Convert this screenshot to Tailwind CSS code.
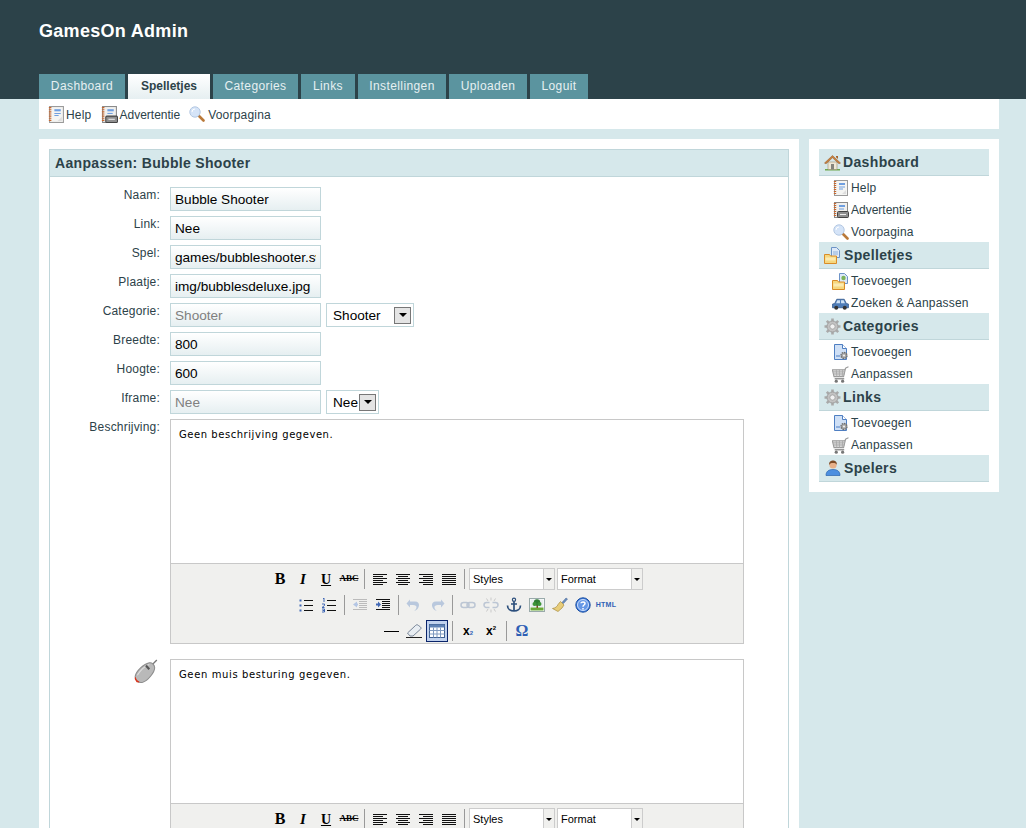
<!DOCTYPE html>
<html lang="nl">
<head>
    <meta charset="UTF-8">
    <title>GamesOn Admin</title>
    <script src="https://cdn.jsdelivr.net/npm/@tailwindcss/browser@4"></script>
</head>
<body class="h-screen overflow-hidden bg-[#d6e8eb] font-['Liberation_Sans',Arial,sans-serif] text-[12px] tracking-[.2px] text-[#2c4249]">

    <!-- icon set -->
    <svg class="hidden">
        <symbol id="i-book" viewBox="0 0 16 16"><rect x="1.500" y=".5" width="13" height="15" fill="#f4f4f2" stroke="#9a9a9a"/><path d="M2 1v14" stroke="#c8662c" stroke-width="2.400" stroke-dasharray="1 1"/><path d="M6 3h6v2H6z" fill="#6f9fe0"/><path d="M6 7h6M6 9h4" stroke="#6f9fe0"/><path d="M9 14l4-4v4z" fill="#ddd"/></symbol>
        <symbol id="i-bookad" viewBox="0 0 16 16"><rect x="1.500" y=".5" width="13" height="15" fill="#f0f0ee" stroke="#8a8a8a"/><path d="M2 1v14" stroke="#c8662c" stroke-width="2.400" stroke-dasharray="1 1"/><path d="M6 3h6v2H6z" fill="#6f9fe0"/><path d="M6 7h5" stroke="#6f9fe0"/><rect x="4.500" y="9.500" width="11" height="6" rx="1" fill="#8f8f8f" stroke="#444"/><path d="M7 12.500h6" stroke="#eee"/></symbol>
        <symbol id="i-search" viewBox="0 0 16 16"><path d="M9.500 9.500l5 5" stroke="#b9793a" stroke-width="2.600" stroke-linecap="round"/><circle cx="6" cy="6" r="5.200" fill="#d5e4f8" stroke="#b4c8e2"/><path d="M3 6a3 3 0 013-3" stroke="#fff" fill="none"/></symbol>
        <symbol id="i-home" viewBox="0 0 17 17"><path d="M1 15h15v1.500H1z" fill="#6ea94a"/><path d="M4 8h9v7.500H4z" fill="#efe8d6" stroke="#9a8d70" stroke-width=".6"/><path d="M7 10h3v5.500H7z" fill="#85857d"/><path d="M.5 9l8-7.500L16.500 9l-1.500.8-6.500-6-6.500 6z" fill="#c9803c" stroke="#8f5526" stroke-width=".5"/><path d="M12 2h2v3l-2-1.700z" fill="#a5642e"/></symbol>
        <symbol id="i-folder" viewBox="0 0 17 17"><path d="M7.500.5h5l3 3v7h-8z" fill="#dde9f8" stroke="#6d93c7"/><path d="M9 5h5M9 7h5" stroke="#8fb0db"/><path d="M.5 7.500h5l1 1.500h6v7.500h-12z" fill="#f6d77e" stroke="#d98c28"/><path d="M1.500 12h10" stroke="#fbeab2" stroke-width="3"/></symbol>
        <symbol id="i-folderadd" viewBox="0 0 17 17"><path d="M7.500.5h5l3 3v7h-8z" fill="#dde9f8" stroke="#6d93c7"/><circle cx="11.500" cy="5" r="2.200" fill="#7cb35a"/><path d="M.5 7.500h5l1 1.500h6v7.500h-12z" fill="#f6d77e" stroke="#d98c28"/><path d="M1.500 12h10" stroke="#fbeab2" stroke-width="3"/></symbol>
        <symbol id="i-car" viewBox="0 0 16 16"><path d="M.5 8.500l2-.5 2-4h7l2 4 2 .5V12H.5z" fill="#4f7db8" stroke="#2d5488" stroke-width=".7"/><path d="M5 5h2.500v2.700H3.800zM8.500 5H11l1.200 2.700H8.500z" fill="#cfe2f6"/><circle cx="4" cy="12" r="1.900" fill="#333"/><circle cx="12" cy="12" r="1.900" fill="#333"/></symbol>
        <symbol id="i-gear" viewBox="0 0 17 17"><path d="M8.500 .5v16M.5 8.500h16M2.800 2.800l11.400 11.400M14.200 2.800L2.800 14.200" stroke="#a9a9a9" stroke-width="2.600"/><circle cx="8.500" cy="8.500" r="5.500" fill="#c2c2c2" stroke="#a0a0a0"/><circle cx="8.500" cy="8.500" r="2.600" fill="#f1f1f1" stroke="#999" stroke-width=".7"/></symbol>
        <symbol id="i-docgear" viewBox="0 0 16 16"><path d="M1.500.5h8l4 4v11h-12z" fill="#cfe0f6" stroke="#4f7fc2"/><path d="M9.500.5v4h4" fill="#fff" stroke="#4f7fc2"/><path d="M3 12h4" stroke="#4f7fc2"/><circle cx="11" cy="11.500" r="3" fill="#a5a5a5" stroke="#6f6f6f" stroke-dasharray="1.500 .8" stroke-width="1.400"/><circle cx="11" cy="11.500" r="1.100" fill="#eee"/></symbol>
        <symbol id="i-cart" viewBox="0 0 16 16"><path d="M15.500 .8l-2.500 1-1 1.700H.3l1.600 6.500h9l1.800-7.500" fill="#d8d8d8" stroke="#9a9a9a"/><path d="M1 5.500h11M1.500 7.500h10.500M4 3.500l.6 6.500M7 3.500v6.500M10 3.500l-.3 6.500" stroke="#a8a8a8" stroke-width=".8"/><path d="M2.500 12h9" stroke="#8f8f8f" stroke-width="1.300"/><circle cx="4" cy="14.300" r="1.500" fill="#777"/><circle cx="10" cy="14.300" r="1.500" fill="#777"/></symbol>
        <symbol id="i-user" viewBox="0 0 16 16"><path d="M1 15.500c0-4 2.500-6 7-6s7 2 7 6z" fill="#4d8fe0" stroke="#2a63ad" stroke-width=".7"/><circle cx="8" cy="5" r="3.600" fill="#e8b088"/><path d="M4.200 5c-.5-3.500 2-4.500 3.800-4.500S12.300 1.500 11.800 5c-.5-1.500-1.500-2-3.800-2s-3.300.5-3.600 2z" fill="#7d4a24"/></symbol>
        <symbol id="i-mouse" viewBox="0 0 24 24"><path d="M17 6l5-5" stroke="#777" stroke-width="1.200"/><path d="M15 3.500c2.500-.5 5 2 5 4.500 0 4-6 12-11 13.500C5 22.500 1.500 19.500 2 16 3 11 10 4.500 15 3.500z" fill="#b9b9b9" stroke="#8d8d8d"/><path d="M4 15C7 10 11 6.500 15 5" stroke="#dedede" fill="none"/><path d="M12 6l3 3.500" stroke="#555" stroke-width="2"/><path d="M2.200 17c.2 2 1.500 3.700 3.500 4.300l-2-.2-1.500-2.500z" fill="#d9341c" stroke="#d9341c"/></symbol>

        <symbol id="t-left" viewBox="0 0 16 16"><path d="M1 3.500h14M1 5.500h10M1 7.500h14M1 9.500h10M1 11.500h14M1 13.500h10" stroke="#111"/></symbol>
        <symbol id="t-center" viewBox="0 0 16 16"><path d="M1 3.500h14M3 5.500h10M1 7.500h14M3 9.500h10M1 11.500h14M3 13.500h10" stroke="#111"/></symbol>
        <symbol id="t-right" viewBox="0 0 16 16"><path d="M1 3.500h14M5 5.500h10M1 7.500h14M5 9.500h10M1 11.500h14M5 13.500h10" stroke="#111"/></symbol>
        <symbol id="t-full" viewBox="0 0 16 16"><path d="M1 3.500h14M1 5.500h14M1 7.500h14M1 9.500h14M1 11.500h14M1 13.500h14" stroke="#111"/></symbol>
        <symbol id="t-bullets" viewBox="0 0 16 16"><path d="M6 3.500h9M6 8.500h9M6 13.500h9" stroke="#111"/><path d="M1.500 2.500h2v2h-2zM1.500 7.500h2v2h-2zM1.500 12.500h2v2h-2z" fill="#3f67b5"/></symbol>
        <symbol id="t-numbers" viewBox="0 0 16 16"><path d="M6 3.500h9M6 8.500h9M6 13.500h9" stroke="#111"/><path d="M2 2l1-1v4M1 7h2.500v1.500L1 10.500h2.500M1 12h2.500v3H1M1.500 13.500h2" stroke="#3f67b5" fill="none"/></symbol>
        <symbol id="t-outdent" viewBox="0 0 16 16"><path d="M1 2.500h14M7 4.500h8M7 6.500h8M7 8.500h8M7 10.500h8M1 12.500h14" stroke="#bbb"/><path d="M1 7.500l4-3v2h1v2H5v2z" fill="#b4c6e4"/></symbol>
        <symbol id="t-indent" viewBox="0 0 16 16"><path d="M1 2.500h14M7 4.500h8M7 6.500h8M7 8.500h8M7 10.500h8M1 12.500h14" stroke="#111"/><path d="M6 7.500l-3-3v2H1v2h2v2z" fill="#3f67b5"/></symbol>
        <symbol id="t-undo" viewBox="0 0 16 16"><path d="M4 4.500h5c6 0 5 8-1 9.500 3-2 4-6-1-6H4v2.500L.5 6.500 4 2.500z" fill="#b9c8dd"/></symbol>
        <symbol id="t-redo" viewBox="0 0 16 16"><path d="M12 4.500H7c-6 0-5 8 1 9.500-3-2-4-6 1-6h3v2.500l3.500-4-3.500-4z" fill="#b9c8dd"/></symbol>
        <symbol id="t-link" viewBox="0 0 16 16"><rect x="1" y="5.500" width="8" height="5" rx="2.500" fill="none" stroke="#bcc6d4" stroke-width="1.500"/><rect x="7" y="5.500" width="8" height="5" rx="2.500" fill="none" stroke="#bcc6d4" stroke-width="1.500"/></symbol>
        <symbol id="t-unlink" viewBox="0 0 16 16"><path d="M6.500 5.500H3.500a2.500 2.500 0 000 5h3M9.500 5.500h3a2.500 2.500 0 010 5h-3" fill="none" stroke="#bcc6d4" stroke-width="1.500"/><path d="M8 .5v3M8 12.500v3M3.500 1.500l1.500 2.500M12.500 1.500L11 4M3.500 14.500L5 12M12.500 14.500L11 12" stroke="#c9c9c9"/></symbol>
        <symbol id="t-anchor" viewBox="0 0 16 16"><circle cx="8" cy="2.800" r="1.600" fill="none" stroke="#2c4f7c" stroke-width="1.200"/><path d="M8 4.500V14M5 7h6M1.500 8.500c0 3.500 3 5.500 6.500 5.500s6.500-2 6.500-5.500" fill="none" stroke="#2c4f7c" stroke-width="1.700"/></symbol>
        <symbol id="t-image" viewBox="0 0 16 16"><rect x=".5" y="1.500" width="15" height="13" fill="#fff" stroke="#9aa"/><rect x="1.500" y="2.500" width="13" height="8" fill="#e8eef0"/><path d="M1.500 10.500h13v3h-13z" fill="#6aa938"/><path d="M7.500 6h1.500v5H7.500z" fill="#7a4f26"/><circle cx="8" cy="5.500" r="3.200" fill="#2f7d32"/><circle cx="5.500" cy="7" r="2" fill="#3d9438"/><circle cx="10.500" cy="7" r="2" fill="#3d9438"/></symbol>
        <symbol id="t-clean" viewBox="0 0 16 16"><path d="M10 5.500l4-4.500 1.500 1-4 4.500z" fill="#6a8fc0" stroke="#3f5f8f" stroke-width=".5"/><path d="M8.500 4.500l3.500 3.500-2 3-4 3.500-5.500-3c2.500-.3 5-2 5.500-4z" fill="#e8cd7a" stroke="#a68b3e" stroke-width=".7"/></symbol>
        <symbol id="t-help" viewBox="0 0 16 16"><circle cx="8" cy="8" r="7.200" fill="#3f7de0" stroke="#1d4f9f"/><circle cx="8" cy="8" r="5.500" fill="#fff" fill-opacity=".2" stroke="#cfe0fa"/><path d="M6 6.300C6 4.500 10 4.500 10 6.500 10 8 8 8 8 9.700M8 11v1.500" stroke="#fff" stroke-width="1.500" fill="none"/></symbol>
        <symbol id="t-eraser" viewBox="0 0 16 16"><path d="M1.500 10L9.500 2.500c1-1 2-1 3 0l2 1.500c.7.8.7 1.500 0 2.200L7 13H4z" fill="#e8edf2" stroke="#5b6b82" stroke-width=".8"/><path d="M0 14.500h16" stroke="#222"/></symbol>
        <symbol id="t-table" viewBox="0 0 16 16"><rect x=".5" y="1.500" width="15" height="13" fill="#fff" stroke="#3e5f90"/><path d="M.5 1.500h15v3H.5z" fill="#5f82b5"/><path d="M4.500 4.500v10M8 4.500v10M11.500 4.500v10M.5 7.500h15M.5 11h15" stroke="#7e99bf"/></symbol>
    </svg>

    <!-- Header -->
    <header class="h-[99px] bg-[#2c4249] pl-[39px]">
        <h1 class="h-[74px] pt-[21px] text-[18px] leading-[21px] font-bold tracking-[.3px] text-white">GamesOn Admin</h1>
        <nav class="flex gap-[3px] text-[12px] leading-[25px] tracking-[.4px] text-[#e6f0f2]">
            <a class="h-[25px] w-[86px] bg-[#5b949f] text-center">Dashboard</a>
            <a class="h-[25px] w-[82px] bg-gradient-to-b from-white to-[#e6eff1] text-center font-bold tracking-normal text-[#2c4249]">Spelletjes</a>
            <a class="h-[25px] w-[85px] bg-[#5b949f] text-center">Categories</a>
            <a class="h-[25px] w-[54px] bg-[#5b949f] text-center">Links</a>
            <a class="h-[25px] w-[88px] bg-[#5b949f] text-center">Instellingen</a>
            <a class="h-[25px] w-[78px] bg-[#5b949f] text-center">Uploaden</a>
            <a class="h-[25px] w-[58px] bg-[#5b949f] text-center">Loguit</a>
        </nav>
    </header>

    <!-- Sub nav -->
    <div class="mr-[27px] ml-[39px] flex h-[30px] items-center bg-white pl-[9px]">
        <svg class="mr-[1px] h-[17px] w-[17px]"><use href="#i-book"/></svg><span class="mt-[2px] mr-[10px]">Help</span>
        <svg class="mr-[1px] h-[17px] w-[17px]"><use href="#i-bookad"/></svg><span class="mt-[2px] mr-[9px] tracking-normal">Advertentie</span>
        <svg class="mr-[3px] h-[16px] w-[16px]"><use href="#i-search"/></svg><span class="mt-[2px]">Voorpagina</span>
    </div>

    <div class="mt-[10px] flex items-start pl-[39px]">

        <!-- Main -->
        <main class="w-[760px] bg-white p-[10px]">
            <h2 class="h-[28px] border border-[#c0d6da] bg-[#d6e8eb] pl-[5px] text-[14px] leading-[26px] font-bold tracking-[.32px]">Aanpassen: Bubble Shooter</h2>
            <div class="border-x border-[#c0d6da] pt-[10px] pr-[44px]">

                <div class="mb-[5px] flex">
                    <label class="-mt-[1px] w-[110px] text-right">Naam:</label>
                    <input class="ml-[10px] h-[24px] w-[151px] border border-[#c0d6da] bg-gradient-to-b from-white to-[#e6eff1] pl-[4px] text-[13.6px] tracking-normal text-black" value="Bubble Shooter">
                </div>
                <div class="mb-[5px] flex">
                    <label class="-mt-[1px] w-[110px] text-right">Link:</label>
                    <input class="ml-[10px] h-[24px] w-[151px] border border-[#c0d6da] bg-gradient-to-b from-white to-[#e6eff1] pl-[4px] text-[13.6px] tracking-normal text-black" value="Nee">
                </div>
                <div class="mb-[5px] flex">
                    <label class="-mt-[1px] w-[110px] text-right">Spel:</label>
                    <input class="ml-[10px] h-[24px] w-[151px] border border-[#c0d6da] bg-gradient-to-b from-white to-[#e6eff1] pr-[4px] pl-[4px] text-[13.6px] tracking-normal text-black" value="games/bubbleshooter.swf">
                </div>
                <div class="mb-[5px] flex">
                    <label class="-mt-[1px] w-[110px] text-right">Plaatje:</label>
                    <input class="ml-[10px] h-[24px] w-[151px] border border-[#c0d6da] bg-gradient-to-b from-white to-[#e6eff1] pl-[4px] text-[13.6px] tracking-normal text-black" value="img/bubblesdeluxe.jpg">
                </div>
                <div class="mb-[5px] flex">
                    <label class="-mt-[1px] w-[110px] text-right">Categorie:</label>
                    <input disabled class="ml-[10px] h-[24px] w-[151px] border border-[#c0d6da] bg-gradient-to-b from-white to-[#e6eff1] pl-[4px] text-[13.6px] tracking-normal text-[#808080]" value="Shooter">
                    <div class="ml-[5px] flex h-[24px] w-[88px] items-center border border-[#c0d6da] bg-white pl-[6px] text-[13.6px] tracking-normal text-black">
                        <span class="mt-[2px]">Shooter</span>
                        <span class="mr-[2px] ml-auto flex h-[17px] w-[17px] items-center justify-center border border-[#777] bg-[#e4e4e4]"><span class="h-0 w-0 border-x-[4px] border-t-[4px] border-x-transparent border-t-black"></span></span>
                    </div>
                </div>
                <div class="mb-[5px] flex">
                    <label class="-mt-[1px] w-[110px] text-right">Breedte:</label>
                    <input class="ml-[10px] h-[24px] w-[151px] border border-[#c0d6da] bg-gradient-to-b from-white to-[#e6eff1] pl-[4px] text-[13.6px] tracking-normal text-black" value="800">
                </div>
                <div class="mb-[5px] flex">
                    <label class="-mt-[1px] w-[110px] text-right">Hoogte:</label>
                    <input class="ml-[10px] h-[24px] w-[151px] border border-[#c0d6da] bg-gradient-to-b from-white to-[#e6eff1] pl-[4px] text-[13.6px] tracking-normal text-black" value="600">
                </div>
                <div class="mb-[5px] flex">
                    <label class="-mt-[1px] w-[110px] text-right">Iframe:</label>
                    <input disabled class="ml-[10px] h-[24px] w-[151px] border border-[#c0d6da] bg-gradient-to-b from-white to-[#e6eff1] pl-[4px] text-[13.6px] tracking-normal text-[#808080]" value="Nee">
                    <div class="ml-[5px] flex h-[24px] w-[53px] items-center border border-[#c0d6da] bg-white pl-[6px] text-[13.6px] tracking-normal text-black">
                        <span class="mt-[2px]">Nee</span>
                        <span class="mr-[2px] ml-auto flex h-[17px] w-[17px] items-center justify-center border border-[#777] bg-[#e4e4e4]"><span class="h-0 w-0 border-x-[4px] border-t-[4px] border-x-transparent border-t-black"></span></span>
                    </div>
                </div>

                <!-- Beschrijving -->
                <div class="mb-[15px] flex">
                    <label class="-mt-[1px] w-[110px] text-right">Beschrijving:</label>
                    <div class="ml-[10px] w-[574px] border border-[#c8c8c8] bg-white">
                        <div class="h-[143px] p-[8px] font-['DejaVu_Sans',sans-serif] text-[10px] leading-[14px] tracking-[.55px] text-black">Geen beschrijving gegeven.</div>
                        <div class="flex h-[80px] flex-col gap-[6px] border-t border-[#c8c8c8] bg-[#f0f0ee] pt-[5px] tracking-normal">
                            <div class="flex h-[20px] items-center justify-center gap-[3px] pr-[1px]">
                                <span class="flex h-[20px] w-[20px] items-center justify-center font-['Liberation_Serif',serif] text-[16px] font-bold text-black">B</span>
                                <span class="flex h-[20px] w-[20px] items-center justify-center font-['Liberation_Serif',serif] text-[15px] font-bold italic text-black">I</span>
                                <span class="flex h-[20px] w-[20px] items-center justify-center font-['Liberation_Serif',serif] text-[14px] font-bold text-black underline">U</span>
                                <span class="flex h-[20px] w-[20px] items-center justify-center font-['Liberation_Serif',serif] text-[9px] font-bold text-black line-through">ABC</span>
                                <span class="flex h-[20px] w-[5px] justify-center"><span class="w-[1px] bg-[#999]"></span></span>
                                <svg class="h-[20px] w-[20px] p-[2px]"><use href="#t-left"/></svg>
                                <svg class="h-[20px] w-[20px] p-[2px]"><use href="#t-center"/></svg>
                                <svg class="h-[20px] w-[20px] p-[2px]"><use href="#t-right"/></svg>
                                <svg class="h-[20px] w-[20px] p-[2px]"><use href="#t-full"/></svg>
                                <span class="flex h-[20px] w-[5px] justify-center"><span class="w-[1px] bg-[#999]"></span></span>
                                <div class="-ml-[1px] flex h-[22px] w-[86px] items-center border border-[#ccc] bg-white pl-[3px] text-[11px] text-black">Styles<span class="ml-auto flex h-full w-[11px] items-center justify-center border-l border-[#ccc] bg-[#f0f0ee]"><span class="h-0 w-0 border-x-[3px] border-t-[3px] border-x-transparent border-t-black"></span></span></div>
                                <div class="-ml-[1px] flex h-[22px] w-[86px] items-center border border-[#ccc] bg-white pl-[3px] text-[11px] text-black">Format<span class="ml-auto flex h-full w-[11px] items-center justify-center border-l border-[#ccc] bg-[#f0f0ee]"><span class="h-0 w-0 border-x-[3px] border-t-[3px] border-x-transparent border-t-black"></span></span></div>
                            </div>
                            <div class="flex h-[20px] items-center justify-center gap-[3px] pr-[2px]">
                                <svg class="h-[20px] w-[20px] p-[2px]"><use href="#t-bullets"/></svg>
                                <svg class="h-[20px] w-[20px] p-[2px]"><use href="#t-numbers"/></svg>
                                <span class="flex h-[20px] w-[5px] justify-center"><span class="w-[1px] bg-[#999]"></span></span>
                                <svg class="h-[20px] w-[20px] p-[2px]"><use href="#t-outdent"/></svg>
                                <svg class="h-[20px] w-[20px] p-[2px]"><use href="#t-indent"/></svg>
                                <span class="flex h-[20px] w-[5px] justify-center"><span class="w-[1px] bg-[#999]"></span></span>
                                <svg class="h-[20px] w-[20px] p-[2px]"><use href="#t-undo"/></svg>
                                <svg class="h-[20px] w-[20px] p-[2px]"><use href="#t-redo"/></svg>
                                <span class="flex h-[20px] w-[5px] justify-center"><span class="w-[1px] bg-[#999]"></span></span>
                                <svg class="h-[20px] w-[20px] p-[2px]"><use href="#t-link"/></svg>
                                <svg class="h-[20px] w-[20px] p-[2px]"><use href="#t-unlink"/></svg>
                                <svg class="h-[20px] w-[20px] p-[2px]"><use href="#t-anchor"/></svg>
                                <svg class="h-[20px] w-[20px] p-[2px]"><use href="#t-image"/></svg>
                                <svg class="h-[20px] w-[20px] p-[2px]"><use href="#t-clean"/></svg>
                                <svg class="h-[20px] w-[20px] p-[2px]"><use href="#t-help"/></svg>
                                <span class="flex h-[20px] w-[20px] items-center justify-center text-[7px] font-bold tracking-[.3px] text-[#2f5fb5]">HTML</span>
                            </div>
                            <div class="flex h-[20px] items-center justify-center gap-[3px] pr-[1px]">
                                <span class="flex h-[20px] w-[20px] items-center justify-center"><span class="h-[1px] w-[15px] bg-black"></span></span>
                                <svg class="h-[20px] w-[20px] p-[2px]"><use href="#t-eraser"/></svg>
                                <span class="-mx-[1px] flex h-[22px] w-[22px] items-center justify-center border border-[#0a246a] bg-[#c1d2ee]"><svg class="h-[16px] w-[16px]"><use href="#t-table"/></svg></span>
                                <span class="flex h-[20px] w-[5px] justify-center"><span class="w-[1px] bg-[#999]"></span></span>
                                <span class="flex h-[20px] w-[20px] items-center justify-center text-[12px] font-bold text-black">x<sub class="text-[6px] text-[#2f5fb5]">2</sub></span>
                                <span class="flex h-[20px] w-[20px] items-center justify-center text-[12px] font-bold text-black">x<sup class="text-[6px]">2</sup></span>
                                <span class="flex h-[20px] w-[5px] justify-center"><span class="w-[1px] bg-[#999]"></span></span>
                                <span class="flex h-[20px] w-[20px] items-center justify-center font-['Liberation_Serif',serif] text-[16px] font-bold text-[#2f5fb5]">Ω</span>
                            </div>
                        </div>
                    </div>
                </div>

                <!-- Muis besturing -->
                <div class="flex">
                    <div class="flex w-[110px] justify-end pr-[1px]"><svg class="h-[26px] w-[26px]"><use href="#i-mouse"/></svg></div>
                    <div class="ml-[10px] w-[574px] border border-[#c8c8c8] bg-white">
                        <div class="h-[143px] p-[8px] font-['DejaVu_Sans',sans-serif] text-[10px] leading-[14px] tracking-[.62px] text-black">Geen muis besturing gegeven.</div>
                        <div class="flex h-[80px] flex-col gap-[6px] border-t border-[#c8c8c8] bg-[#f0f0ee] pt-[5px] tracking-normal">
                            <div class="flex h-[20px] items-center justify-center gap-[3px] pr-[1px]">
                                <span class="flex h-[20px] w-[20px] items-center justify-center font-['Liberation_Serif',serif] text-[16px] font-bold text-black">B</span>
                                <span class="flex h-[20px] w-[20px] items-center justify-center font-['Liberation_Serif',serif] text-[15px] font-bold italic text-black">I</span>
                                <span class="flex h-[20px] w-[20px] items-center justify-center font-['Liberation_Serif',serif] text-[14px] font-bold text-black underline">U</span>
                                <span class="flex h-[20px] w-[20px] items-center justify-center font-['Liberation_Serif',serif] text-[9px] font-bold text-black line-through">ABC</span>
                                <span class="flex h-[20px] w-[5px] justify-center"><span class="w-[1px] bg-[#999]"></span></span>
                                <svg class="h-[20px] w-[20px] p-[2px]"><use href="#t-left"/></svg>
                                <svg class="h-[20px] w-[20px] p-[2px]"><use href="#t-center"/></svg>
                                <svg class="h-[20px] w-[20px] p-[2px]"><use href="#t-right"/></svg>
                                <svg class="h-[20px] w-[20px] p-[2px]"><use href="#t-full"/></svg>
                                <span class="flex h-[20px] w-[5px] justify-center"><span class="w-[1px] bg-[#999]"></span></span>
                                <div class="-ml-[1px] flex h-[22px] w-[86px] items-center border border-[#ccc] bg-white pl-[3px] text-[11px] text-black">Styles<span class="ml-auto flex h-full w-[11px] items-center justify-center border-l border-[#ccc] bg-[#f0f0ee]"><span class="h-0 w-0 border-x-[3px] border-t-[3px] border-x-transparent border-t-black"></span></span></div>
                                <div class="-ml-[1px] flex h-[22px] w-[86px] items-center border border-[#ccc] bg-white pl-[3px] text-[11px] text-black">Format<span class="ml-auto flex h-full w-[11px] items-center justify-center border-l border-[#ccc] bg-[#f0f0ee]"><span class="h-0 w-0 border-x-[3px] border-t-[3px] border-x-transparent border-t-black"></span></span></div>
                            </div>
                        </div>
                    </div>
                </div>
            </div>
        </main>

        <!-- Sidebar -->
        <aside class="ml-[10px] w-[190px] bg-white p-[10px]">
            <h3 class="flex h-[27px] items-center border-b border-[#c0d6da] bg-[#d6e8eb] text-[14px] font-bold tracking-[.35px]"><svg class="mr-[2px] ml-[5px] h-[17px] w-[17px]"><use href="#i-home"/></svg>Dashboard</h3>
            <div class="flex h-[22px] items-center pt-[2px] pl-[14px]"><svg class="mr-[2px] h-[16px] w-[16px]"><use href="#i-book"/></svg>Help</div>
            <div class="flex h-[22px] items-center pt-[2px] pl-[14px] tracking-normal"><svg class="mr-[2px] h-[16px] w-[16px]"><use href="#i-bookad"/></svg>Advertentie</div>
            <div class="flex h-[22px] items-center pt-[2px] pl-[14px]"><svg class="mr-[2px] h-[16px] w-[16px]"><use href="#i-search"/></svg>Voorpagina</div>
            <h3 class="flex h-[27px] items-center border-b border-[#c0d6da] bg-[#d6e8eb] text-[14px] font-bold tracking-[.35px]"><svg class="mr-[3px] ml-[5px] h-[17px] w-[17px]"><use href="#i-folder"/></svg>Spelletjes</h3>
            <div class="flex h-[22px] items-center pt-[2px] pl-[13px]"><svg class="mr-[2px] h-[17px] w-[17px]"><use href="#i-folderadd"/></svg>Toevoegen</div>
            <div class="flex h-[22px] items-center pt-[2px] pl-[13px]"><svg class="mr-[2px] h-[17px] w-[17px]"><use href="#i-car"/></svg>Zoeken &amp; Aanpassen</div>
            <h3 class="flex h-[27px] items-center border-b border-[#c0d6da] bg-[#d6e8eb] text-[14px] font-bold tracking-[.35px]"><svg class="mr-[2px] ml-[5px] h-[17px] w-[17px]"><use href="#i-gear"/></svg>Categories</h3>
            <div class="flex h-[22px] items-center pt-[2px] pl-[14px]"><svg class="mr-[2px] h-[16px] w-[16px]"><use href="#i-docgear"/></svg>Toevoegen</div>
            <div class="flex h-[22px] items-center pt-[2px] pl-[13px]"><svg class="mr-[2px] h-[17px] w-[17px]"><use href="#i-cart"/></svg>Aanpassen</div>
            <h3 class="flex h-[27px] items-center border-b border-[#c0d6da] bg-[#d6e8eb] text-[14px] font-bold tracking-[.35px]"><svg class="mr-[2px] ml-[5px] h-[17px] w-[17px]"><use href="#i-gear"/></svg>Links</h3>
            <div class="flex h-[22px] items-center pt-[2px] pl-[14px]"><svg class="mr-[2px] h-[16px] w-[16px]"><use href="#i-docgear"/></svg>Toevoegen</div>
            <div class="flex h-[22px] items-center pt-[2px] pl-[13px]"><svg class="mr-[2px] h-[17px] w-[17px]"><use href="#i-cart"/></svg>Aanpassen</div>
            <h3 class="flex h-[27px] items-center border-b border-[#c0d6da] bg-[#d6e8eb] text-[14px] font-bold tracking-[.35px]"><svg class="mr-[3px] ml-[6px] h-[16px] w-[16px]"><use href="#i-user"/></svg>Spelers</h3>
        </aside>
    </div>
</body>
</html>
